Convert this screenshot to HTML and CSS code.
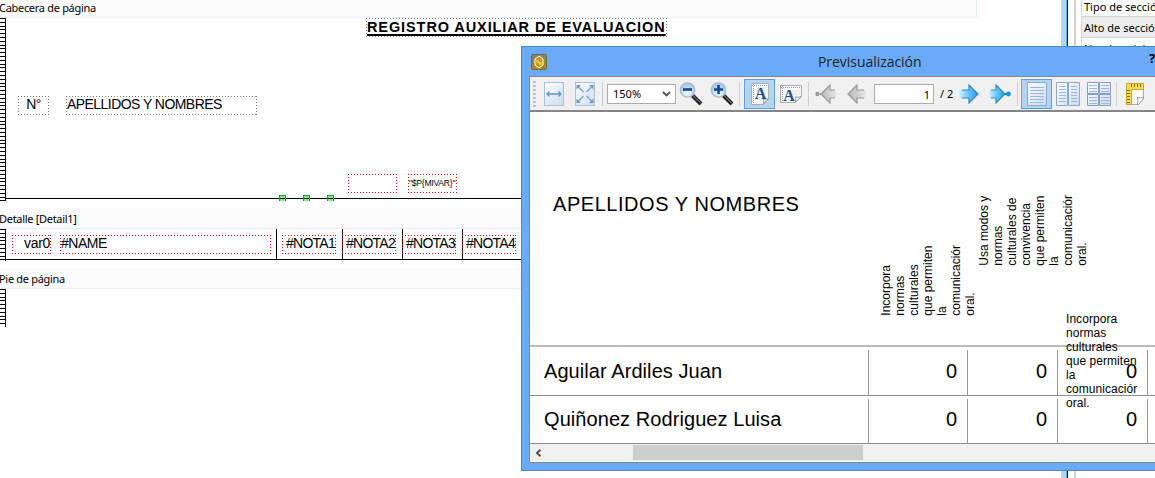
FILE: index.html
```html
<!DOCTYPE html>
<html lang="es">
<head>
    <meta charset="UTF-8">
    <meta name="viewport" content="width=device-width, initial-scale=1.0">
    <title>Previsualización</title>
    <link rel="stylesheet" href="styles.css">
</head>
<body>
    <div class="app">
        <main class="designer">
            <section class="band">
                <div class="band-title first">Cabecera de página</div>
                <div class="band-canvas header-band">
                    <div class="ruler"></div>
                    <div class="item label title">REGISTRO AUXILIAR DE EVALUACION</div>
                    <div class="item label number">N°</div>
                    <div class="item label names">APELLIDOS Y NOMBRES</div>
                    <div class="item field empty"></div>
                    <div class="item field mivar">"$P{MIVAR}"</div>
                    <div class="h-line header-line"></div>
                    <span class="handle handle-1"></span>
                    <span class="handle handle-2"></span>
                    <span class="handle handle-3"></span>
                </div>
            </section>
            <section class="band">
                <div class="band-title">Detalle [Detail1]</div>
                <div class="band-canvas detail-band">
                    <div class="ruler"></div>
                    <div class="item field var0">var0</div>
                    <div class="item field name">#NAME</div>
                    <div class="v-line v-1"></div>
                    <div class="item field nota nota-1">#NOTA1</div>
                    <div class="v-line v-2"></div>
                    <div class="item field nota nota-2">#NOTA2</div>
                    <div class="v-line v-3"></div>
                    <div class="item field nota nota-3">#NOTA3</div>
                    <div class="v-line v-4"></div>
                    <div class="item field nota nota-4">#NOTA4</div>
                    <div class="h-line detail-line"></div>
                </div>
            </section>
            <section class="band">
                <div class="band-title">Pie de página</div>
                <div class="band-canvas footer-band">
                    <div class="ruler"></div>
                </div>
            </section>
        </main>
        <div class="splitter"></div>
        <aside class="properties">
            <div class="prop">Tipo de sección</div>
            <div class="prop alt">Alto de sección</div>
            <div class="prop">Nombre del</div>
        </aside>
    </div>

    <div class="window">
        <header class="titlebar">
            <svg class="app-icon" width="16" height="16" viewBox="0 0 16 16">
                <defs><linearGradient id="gold" x1="0" y1="0" x2="0" y2="1"><stop offset="0" stop-color="#858173"/><stop offset="1" stop-color="#b58706"/></linearGradient></defs>
                <rect x=".5" y=".5" width="15" height="15" rx="1" fill="url(#gold)" stroke="#74663e"/>
                <path d="M8 2 12 5v6l-4 3-4-3V5z" fill="#b99720" stroke="#fff"/>
                <path d="M5.500 6H8v2h2.500v3H8V9H5.500z" fill="#f4cb28"/>
            </svg>
            <h1>Previsualización</h1>
            <span class="help">?</span>
        </header>

        <div class="client">
            <div class="toolbar">
                <svg width="0" height="0" class="defs">
                    <defs>
                        <linearGradient id="sheet" x1="0" y1="0" x2="1" y2="1"><stop offset="0" stop-color="#fdfeff"/><stop offset="1" stop-color="#cbdcef"/></linearGradient>
                        <linearGradient id="blue" x1="0" y1="0" x2="1" y2="0"><stop offset="0" stop-color="#d4f1ff"/><stop offset=".5" stop-color="#62c6fb"/><stop offset="1" stop-color="#2a9be8"/></linearGradient>
                        <linearGradient id="grey" x1="0" y1="0" x2="1" y2="0"><stop offset="0" stop-color="#b5b5b5"/><stop offset="1" stop-color="#e8e8e8"/></linearGradient>
                        <radialGradient id="lens" cx=".5" cy=".7"><stop offset="0" stop-color="#fff"/><stop offset="1" stop-color="#a9cdf3"/></radialGradient>
                    </defs>
                </svg>
                <div class="grip"></div>
                <button class="tool">
                    <svg width="20" height="24" viewBox="0 0 20 24">
                        <rect x=".5" y=".5" width="19" height="23" fill="url(#sheet)" stroke="#a9bfdb"/>
                        <path d="M3 12h14M5.500 9.500 3 12l2.500 2.500M14.500 9.500 17 12l-2.500 2.500" fill="none" stroke="#6590c4" stroke-width="1.300"/>
                    </svg>
                </button>
                <button class="tool">
                    <svg width="20" height="24" viewBox="0 0 20 24">
                        <rect x=".5" y=".5" width="19" height="23" fill="url(#sheet)" stroke="#a9bfdb"/>
                        <path d="M2.500 4l6 6M17.500 4l-6 6M2.500 20l6-6M17.500 20l-6-6" stroke="#7b9fcc" stroke-width="1.200"/>
                        <path d="M1.500 3h4.500L1.500 7.500zM18.500 3H14l4.500 4.500zM1.500 21H6l-4.500-4.500zM18.500 21H14l4.500-4.500z" fill="#7096c6"/>
                    </svg>
                </button>
                <span class="sep"></span>
                <div class="combo">150%
                    <svg width="9" height="6" viewBox="0 0 9 6"><path d="M1 1l3.500 3.500L8 1" fill="none" stroke="#505050" stroke-width="1.800"/></svg>
                </div>
                <button class="tool">
                    <svg width="24" height="24" viewBox="0 0 24 24">
                        <path d="M13.500 13.500 22 22" stroke="#222" stroke-width="4"/>
                        <path d="M13 12.500 22 21.500" stroke="#999" stroke-width="1"/>
                        <circle cx="8.500" cy="8" r="7.200" fill="url(#lens)" stroke="#aab6c6" stroke-width="1.300"/>
                        <path d="M4 7.500h9" stroke="#0d4a95" stroke-width="2.600"/>
                    </svg>
                </button>
                <button class="tool">
                    <svg width="24" height="24" viewBox="0 0 24 24">
                        <path d="M13.500 13.500 22 22" stroke="#222" stroke-width="4"/>
                        <path d="M13 12.500 22 21.500" stroke="#999" stroke-width="1"/>
                        <circle cx="8.500" cy="8" r="7.200" fill="url(#lens)" stroke="#aab6c6" stroke-width="1.300"/>
                        <path d="M4 7.500h9M8.500 3v9" stroke="#0d4a95" stroke-width="2.600"/>
                    </svg>
                </button>
                <span class="sep wide"></span>
                <button class="tool active">
                    <svg width="18" height="22" viewBox="0 0 18 22">
                        <path d="M.5.5h17v15l-5 6H.5z" fill="#f6f8fa" stroke="#aab0b8"/>
                        <path d="M2.500 1v19M1 2.500h16" stroke="#999" stroke-dasharray="1 1"/>
                        <path d="M5 5h11M5 8h11M5 11h11M5 14h11M5 17h7" stroke="#dde2e8"/>
                        <path d="M12 21.500c1-2 1-3 .5-5.500 2 .5 3.500.2 5-.5z" fill="#fff" stroke="#999"/>
                        <text x="9.500" y="16" class="glyph">A</text>
                    </svg>
                </button>
                <button class="tool">
                    <svg width="22" height="18" viewBox="0 0 22 18">
                        <path d="M.5.5h21v11l-6 6H.5z" fill="#f8f8f8" stroke="#aaa"/>
                        <path d="M2.500 1v16M1 2.500h20" stroke="#999" stroke-dasharray="1 1"/>
                        <path d="M5 6h15M5 9h15M5 12h15M5 15h10" stroke="#e0e0e0"/>
                        <path d="M15 17.500c1-2 1-3 .5-5.500 2 .5 4 .2 6-.5z" fill="#fff" stroke="#999"/>
                        <text x="9" y="16" class="glyph">A</text>
                    </svg>
                </button>
                <span class="sep nav"></span>
                <button class="tool">
                    <svg width="22" height="20" viewBox="0 0 22 20">
                        <path d="M5 10h4" stroke="#999" stroke-width="2"/><circle cx="2.500" cy="10" r="2.200" fill="#999"/>
                        <path d="M6 10 15 1v5h6v8h-6v5z" fill="url(#grey)"/>
                        <path d="M20 6h-5V1L6 10l9 9v-5h5" fill="none" stroke="#999" stroke-width="1.200"/>
                    </svg>
                </button>
                <button class="tool">
                    <svg width="20" height="20" viewBox="0 0 20 20">
                        <path d="M1 10 10 1v5h9v8h-9v5z" fill="url(#grey)"/>
                        <path d="M17 6h-7V1L1 10l9 9v-5h7" fill="none" stroke="#999" stroke-width="1.200"/>
                    </svg>
                </button>
                <div class="page-input">1</div>
                <span class="page-total">/ 2</span>
                <button class="tool">
                    <svg width="20" height="20" viewBox="0 0 20 20">
                        <path d="M0 6h10V1l9 9-9 9v-5H0z" fill="url(#blue)"/>
                        <path d="M3 6h7V1l9 9-9 9v-5H3" fill="none" stroke="#3a86bd" stroke-width="1.200"/>
                    </svg>
                </button>
                <button class="tool">
                    <svg width="22" height="20" viewBox="0 0 22 20">
                        <path d="M15 10h4" stroke="#1c83d4" stroke-width="2"/><circle cx="19.500" cy="10" r="2.400" fill="#1592e4"/>
                        <path d="M0 6h7V1l9 9-9 9v-5H0z" fill="url(#blue)"/>
                        <path d="M2 6h5V1l9 9-9 9v-5H2" fill="none" stroke="#3a86bd" stroke-width="1.200"/>
                    </svg>
                </button>
                <span class="sep views"></span>
                <button class="tool active">
                    <svg width="20" height="24" viewBox="0 0 20 24">
                        <rect x=".5" y=".5" width="19" height="23" fill="url(#sheet)" stroke="#8ba9d0"/>
                        <path d="M3 5.500h14M3 8.500h14M3 11.500h14M3 14.500h14M3 17.500h14M3 20.500h14" stroke="#9db5d6"/>
                    </svg>
                </button>
                <button class="tool">
                    <svg width="24" height="24" viewBox="0 0 24 24">
                        <path d="M.5.500h11v23H.5zM12.500.500h11v23h-11z" fill="url(#sheet)" stroke="#8ba9d0"/>
                        <path d="M3 4.500h7M3 7.500h7M3 10.500h7M3 13.500h7M3 16.500h7M3 19.500h7M15 4.500h6M15 7.500h6M15 10.500h6M15 13.500h6M15 16.500h6M15 19.500h6" stroke="#9db5d6"/>
                    </svg>
                </button>
                <button class="tool">
                    <svg width="24" height="24" viewBox="0 0 24 24">
                        <path d="M.5.500h11v11H.5zM12.500.500h11v11h-11zM.5 12.500h11v11H.5zM12.500 12.500h11v11h-11z" fill="url(#sheet)" stroke="#7f9fc9"/>
                        <path d="M2 3.500h8M2 6.500h8M2 9.500h8M14 3.500h8M14 6.500h8M14 9.500h8M2 15.500h8M2 18.500h8M2 21.500h8M14 15.500h8M14 18.500h8M14 21.500h8" stroke="#9db5d6"/>
                    </svg>
                </button>
                <span class="sep"></span>
                <button class="tool">
                    <svg width="18" height="22" viewBox="0 0 18 22">
                        <path d="M.5.5h17v15l-5 6H.5z" fill="#fdfdfd" stroke="#aaa"/>
                        <path d="M.5.5h17v6h-12v15h-5z" fill="#f7dc50" stroke="#c9a52c"/>
                        <path d="M5.500 1v3M8.500 1v3M11.500 1v3M14.500 1v3M1 7.500h3M1 10.500h3M1 13.500h3M1 16.500h3M1 19.500h3" stroke="#86640c"/>
                        <path d="M11 21.500c1-2 1-4 .5-7 2 .5 4 .2 6 0v1l-5 6z" fill="#fff" stroke="#999"/>
                    </svg>
                </button>
            </div>

            <div class="preview">
                <div class="heading">APELLIDOS Y NOMBRES</div>
                <div class="note vertical note-1">Incorpora<br>normas<br>culturales<br>que permiten<br>la<br>comunicaciór<br>oral.</div>
                <div class="note vertical note-2">Usa modos y<br>normas<br>culturales de<br>convivencia<br>que permiten<br>la<br>comunicaciór<br>oral.</div>
                <div class="note note-3">Incorpora<br>normas<br>culturales<br>que permiten<br>la<br>comunicaciór<br>oral.</div>
                <div class="grades">
                    <div class="row">
                        <span>Aguilar Ardiles Juan</span><span>0</span><span>0</span><span>0</span><span></span>
                    </div>
                    <div class="row">
                        <span>Quiñonez Rodriguez Luisa</span><span>0</span><span>0</span><span>0</span><span></span>
                    </div>
                </div>
            </div>
            <div class="scrollbar">
                <svg width="7" height="8" viewBox="0 0 7 8"><path d="M5.500.7 2 4l3.500 3.300" fill="none" stroke="#555" stroke-width="2"/></svg>
                <div class="thumb"></div>
            </div>
        </div>
    </div>
</body>
</html>
```
FILE: styles.css
```css
* {
    box-sizing: border-box;
}
body {
    margin: 0;
    height: 478px;
    overflow: hidden;
    position: relative;
    background: #fff;
    color: #000;
    font-family: "Noto Sans", sans-serif;
    font-size: 11px;
}
.app {
    display: flex;
    height: 478px;
}
.designer {
    flex: 1;
    min-width: 0;
}

/* report bands */
.band-title {
    width: 977px;
    height: 21px;
    margin-top: 7px;
    line-height: 21px;
    letter-spacing: -0.3px;
    background: #fbfbfc;
    border-bottom: 1px solid #e6eef8;
    border-right: 1px solid #e6eef8;
    white-space: nowrap;
    text-indent: -1px;
}
.band-title.first {
    height: 18px;
    margin-top: 0;
    line-height: 16px;
}
.band-canvas {
    position: relative;
}
.header-band {
    height: 183px;
}
.detail-band {
    height: 32px;
}
.footer-band {
    height: 38px;
}
.ruler {
    width: 6px;
    height: 100%;
    border-right: 1px solid #000;
    background:
        linear-gradient(#000 0 1px, transparent 1px) 0 0 / 6px 19px,
        linear-gradient(transparent 4px, #000 4px 5px, transparent 5px 8px, #000 8px 9px, transparent 9px 11px, #000 11px 12px, transparent 12px 15px, #000 15px 16px, transparent 16px) 1px 0 / 6px 19px;
}
.item {
    --dot: #777;
    position: absolute;
    height: 19px;
    padding: 1px;
    line-height: 15px;
    font-family: "Liberation Sans", sans-serif;
    font-size: 14px;
    letter-spacing: -0.5px;
    white-space: nowrap;
    background:
        repeating-linear-gradient(90deg, var(--dot) 0 1px, transparent 1px 3px) 0 0 / 100% 1px no-repeat,
        repeating-linear-gradient(90deg, var(--dot) 0 1px, transparent 1px 3px) 0 100% / 100% 1px no-repeat,
        repeating-linear-gradient(var(--dot) 0 1px, transparent 1px 3px) 0 0 / 1px 100% no-repeat,
        repeating-linear-gradient(var(--dot) 0 1px, transparent 1px 3px) 100% 0 / 1px 100% no-repeat;
}
.field {
    --dot: #f00;
}
.title {
    left: 366px;
    top: 0;
    width: 301px;
    height: 19px;
    line-height: 17px;
    font-size: 14.5px;
    font-weight: bold;
    letter-spacing: 0.9px;
    text-decoration: underline;
    text-decoration-thickness: 2px;
    text-underline-offset: 2px;
}
.number {
    left: 18px;
    top: 78px;
    width: 31px;
    text-align: center;
}
.names {
    left: 66px;
    top: 78px;
    width: 191px;
    letter-spacing: -0.55px;
}
.empty {
    left: 348px;
    top: 156px;
    width: 49px;
}
.mivar {
    left: 408px;
    top: 156px;
    width: 49px;
    font-size: 8.5px;
    letter-spacing: -0.2px;
    line-height: 17px;
}
.h-line {
    position: absolute;
    left: 6px;
    right: 0;
    height: 1px;
    background: #000;
}
.header-line {
    top: 180px;
}
.detail-line {
    top: 30px;
}
.handle {
    position: absolute;
    top: 177px;
    width: 7px;
    height: 6px;
    background: linear-gradient(#7fee7f 2px, #111 2px 3px, #7fee7f 3px);
    border: 1px solid #3c8c4c;
    border-bottom: none;
}
.handle-1 {
    left: 279px;
}
.handle-2 {
    left: 303px;
}
.handle-3 {
    left: 327px;
}
.var0 {
    left: 12px;
    top: 6px;
    width: 39px;
    text-align: right;
    letter-spacing: -0.3px;
}
.name {
    left: 60px;
    top: 6px;
    width: 211px;
}
.nota {
    top: 6px;
    width: 54px;
    padding-left: 4px;
    letter-spacing: -0.75px;
}
.nota-1 {
    left: 282px;
}
.nota-2 {
    left: 342px;
}
.nota-3 {
    left: 402px;
}
.nota-4 {
    left: 462px;
}
.v-line {
    position: absolute;
    top: 0;
    width: 1px;
    height: 31px;
    background: #000;
}
.v-1 {
    left: 276px;
}
.v-2 {
    left: 342px;
}
.v-3 {
    left: 402px;
}
.v-4 {
    left: 462px;
}

/* property panel */
.splitter {
    width: 7px;
    background: linear-gradient(90deg, #b9d1ec 5px, #2cc7f2 5px 6px, #000 6px);
}
.properties {
    width: 87px;
    padding-left: 7px;
    background: linear-gradient(90deg, transparent 6px, #cfcfcf 6px 8px, transparent 8px);
}
.prop {
    height: 21px;
    margin-left: 6px;
    padding-left: 2px;
    line-height: 21px;
    border-left: 1px solid #d4d4d4;
    border-bottom: 1px solid #d4d4d4;
    white-space: nowrap;
    overflow: hidden;
}
.prop:first-child {
    height: 17px;
    line-height: 14px;
}
.prop.alt {
    background: #ececec;
}

/* preview window */
.window {
    position: absolute;
    left: 521px;
    top: 46px;
    width: 634px;
    height: 425px;
    overflow: hidden;
    padding-left: 7px;
    background: #6aabf7;
    border: 1px solid #4a86c8;
    border-right: none;
}
.titlebar {
    display: flex;
    align-items: center;
    height: 29px;
    padding-left: 2px;
}
.titlebar h1 {
    flex: 1;
    margin: 0 0 0 155px;
    padding-left: 116px;
    font-family: "Open Sans", sans-serif;
    font-size: 14px;
    font-weight: normal;
    letter-spacing: -0.05px;
    line-height: 29px;
    color: #222;
}
.help {
    width: 6px;
    font-size: 13px;
    font-weight: bold;
    margin-top: -8px;
}
.client {
    height: 387px;
    border: 1px solid #83878c;
    border-right: none;
    background: #fff;
}
.toolbar {
    display: flex;
    align-items: center;
    height: 35px;
    background: #f0f0f0;
    border-bottom: 2px solid #85858a;
}
.defs {
    position: absolute;
}
.grip {
    width: 3px;
    height: 27px;
    margin: 0 2px 0 3px;
    background: radial-gradient(circle, #bbb 1px, transparent 1.5px) 0 0 / 3px 4px;
}
.tool {
    display: flex;
    align-items: center;
    justify-content: center;
    flex: none;
    width: 31px;
    height: 30px;
    padding: 0;
    border: 1px solid transparent;
    background: none;
}
.tool.active {
    background: #b3d5f4;
    border-color: #5a9fe2;
}
.glyph {
    font: bold 16px "Liberation Serif", serif;
    text-anchor: middle;
    fill: #1b4f8c;
}
.sep {
    flex: none;
    width: 1px;
    height: 24px;
    margin: 0 2px;
    background: #cfcfcf;
}
.sep.wide {
    margin-right: 4px;
}
.sep.nav {
    margin-right: 1px;
}
.sep.views {
    margin-right: 3px;
}
.combo {
    display: flex;
    align-items: center;
    justify-content: space-between;
    flex: none;
    width: 69px;
    height: 20px;
    margin: 0 -1px 0 2px;
    padding: 0 4px 0 5px;
    background: #fff;
    border: 1px solid #ababab;
}
.page-input {
    flex: none;
    width: 60px;
    height: 20px;
    margin-left: 2px;
    padding-right: 3px;
    line-height: 20px;
    text-align: right;
    background: #fff;
    border: 1px solid #ababab;
}
.page-total {
    flex: none;
    width: 19px;
    padding-left: 6px;
    white-space: nowrap;
}
.preview {
    position: relative;
    height: 332px;
    padding-top: 233px;
    font-family: "Liberation Sans", sans-serif;
}
.heading {
    position: absolute;
    left: 23px;
    top: 80px;
    font-size: 20px;
    line-height: 24px;
    letter-spacing: 0.55px;
    white-space: nowrap;
}
.note {
    position: absolute;
    font-size: 12px;
    line-height: 14px;
    white-space: nowrap;
}
.vertical {
    writing-mode: vertical-rl;
    transform: rotate(180deg);
}
.note-1 {
    left: 349px;
    bottom: 128px;
}
.note-2 {
    left: 447px;
    bottom: 178px;
}
.note-3 {
    left: 536px;
    top: 200px;
    letter-spacing: 0.05px;
}
.grades {
    border-top: 2px solid #bbb;
}
.row {
    display: grid;
    grid-template-columns: 339px 99px 90px 90px 1fr;
    height: 48px;
    padding-top: 3px;
    border-bottom: 1px solid #8c8c8c;
    font-size: 20px;
    line-height: 42px;
}
.row:last-child {
    line-height: 40px;
}
.row:first-child {
    height: 49px;
}
.row span {
    padding-right: 10px;
    border-right: 1px solid #999;
    text-align: right;
}
.row span:first-child {
    padding-left: 14px;
    text-align: left;
    letter-spacing: 0.07px;
}
.row span:last-child {
    border: none;
}
.scrollbar {
    display: flex;
    align-items: center;
    height: 17px;
    padding-left: 5px;
    background: #f0f0f0;
}
.thumb {
    width: 230px;
    height: 15px;
    margin-left: 91px;
    background: #cdcdcd;
}
```
